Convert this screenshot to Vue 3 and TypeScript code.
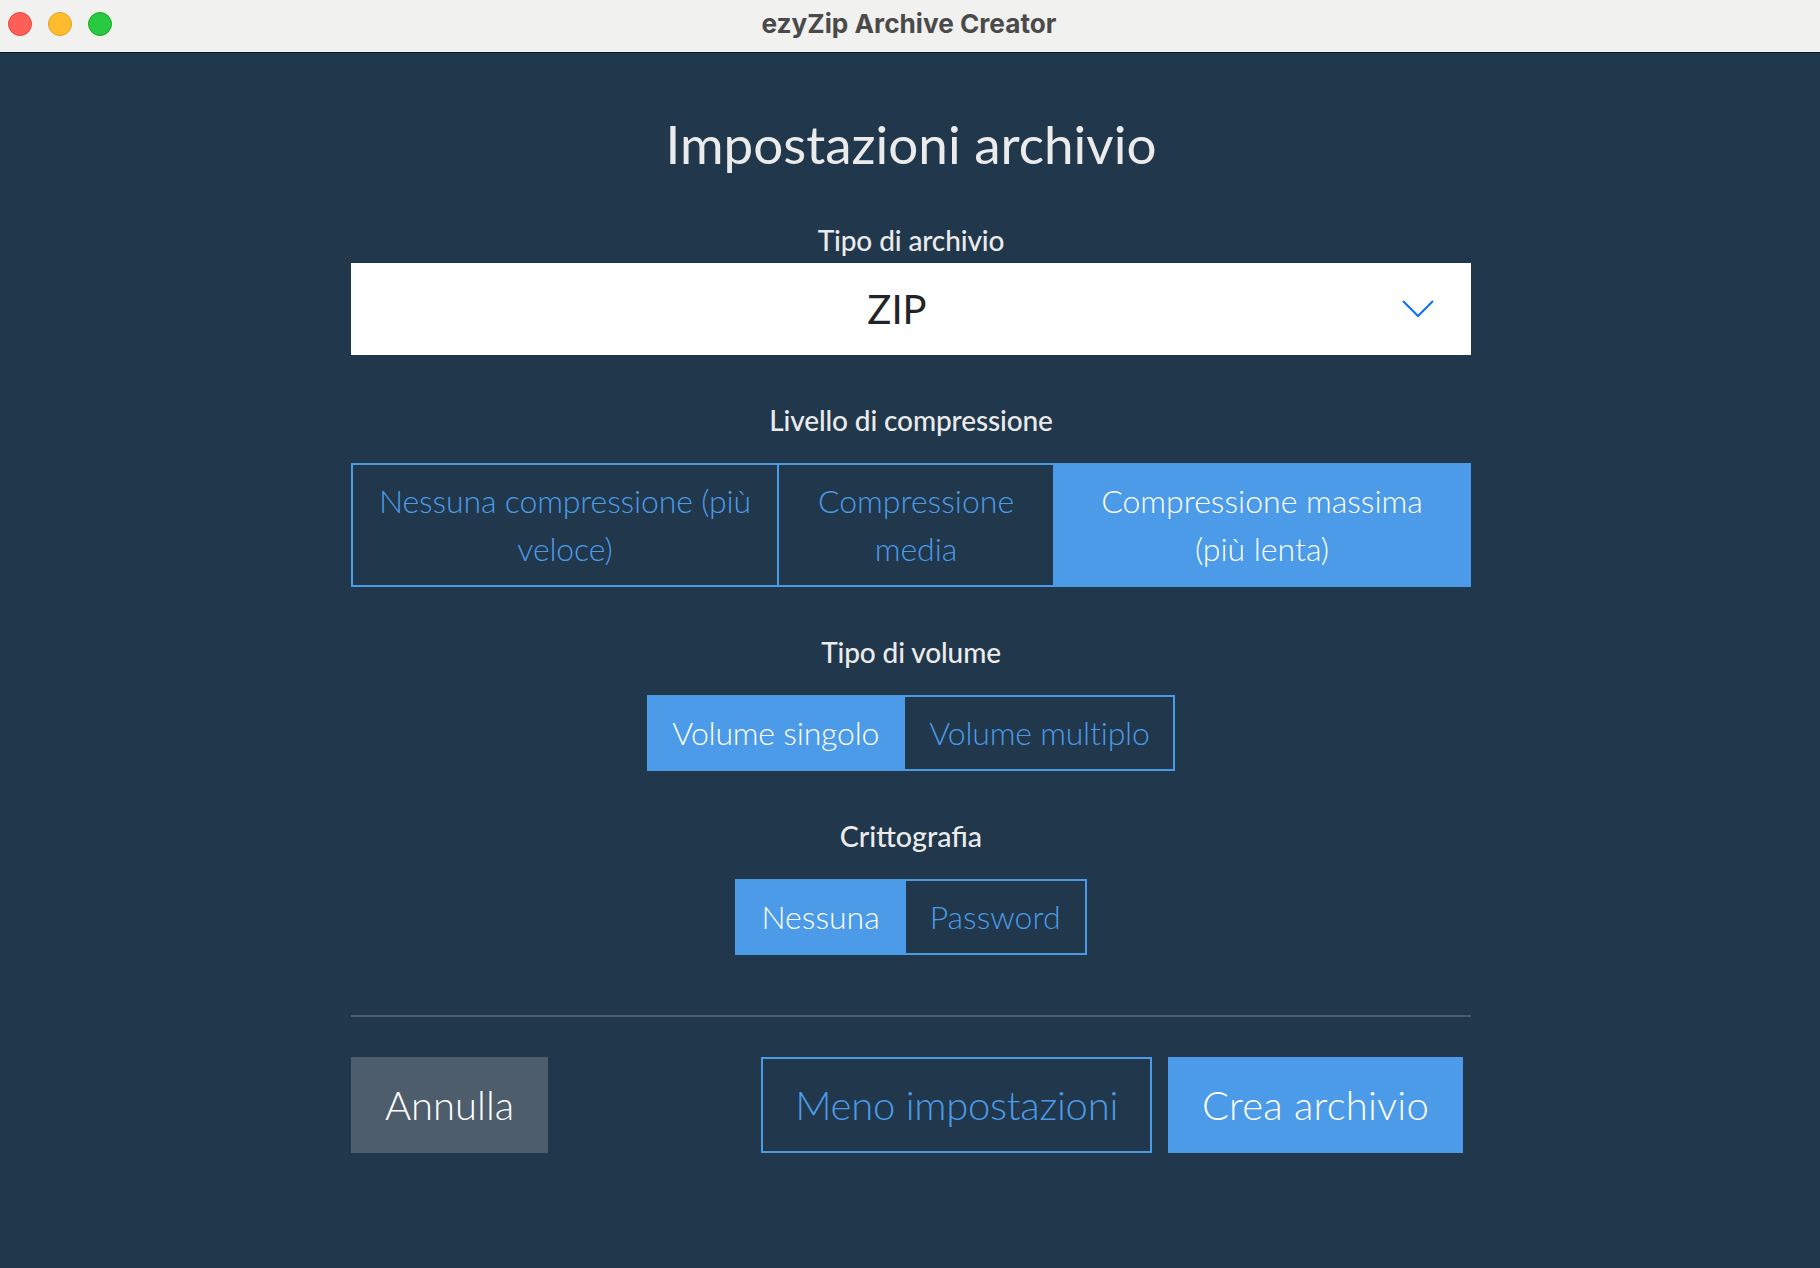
<script setup lang="ts">
interface Option { label: string; active: boolean }
const levels: Option[] = [
  { label: 'Nessuna compressione (più veloce)', active: false },
  { label: 'Compressione media', active: false },
  { label: 'Compressione massima (più lenta)', active: true },
]
const volumes: Option[] = [
  { label: 'Volume singolo', active: true },
  { label: 'Volume multiplo', active: false },
]
const crypto: Option[] = [
  { label: 'Nessuna', active: true },
  { label: 'Password', active: false },
]
</script>

<template>
  <div class="window">
    <header class="titlebar">
      <div class="lights">
        <span class="light red"></span>
        <span class="light yellow"></span>
        <span class="light green"></span>
      </div>
      <span class="wintitle">ezyZip Archive Creator</span>
    </header>
    <main class="content">
      <h1 class="heading">Impostazioni archivio</h1>

      <div class="label first">Tipo di archivio</div>
      <div class="select">
        <span class="select-value">ZIP</span>
        <svg class="chevron" width="32" height="18" viewBox="0 0 32 18" fill="none">
          <path d="M1 1 L16 16 L31 1" stroke="#0d6efd" stroke-width="2" />
        </svg>
      </div>

      <div class="label level-label">Livello di compressione</div>
      <div class="levels">
        <button v-for="o in levels" :key="o.label" class="seg" :class="{ on: o.active }">{{ o.label }}</button>
      </div>

      <div class="label volume-label">Tipo di volume</div>
      <div class="group tight">
        <button v-for="o in volumes" :key="o.label" class="seg" :class="{ on: o.active }">{{ o.label }}</button>
      </div>

      <div class="label crypto-label">Crittografia</div>
      <div class="group">
        <button v-for="o in crypto" :key="o.label" class="seg" :class="{ on: o.active }">{{ o.label }}</button>
      </div>

      <hr class="rule" />

      <div class="actions">
        <button class="big cancel">Annulla</button>
        <div class="actions-right">
          <button class="big outline">Meno impostazioni</button>
          <button class="big primary">Crea archivio</button>
        </div>
      </div>
    </main>
  </div>
</template>

<style scoped>
.window {
  width: 1820px;
  height: 1268px;
  background: #20374c;
  display: flex;
  flex-direction: column;
  font-family: Lato, "Liberation Sans", sans-serif;
  overflow: hidden;
}
.titlebar {
  height: 52px;
  flex: none;
  background: #f1f1ef;
  border-bottom: 1px solid #0c1722;
  display: flex;
  align-items: center;
  justify-content: center;
  position: relative;
}
.lights {
  position: absolute;
  left: 8px;
  top: 12px;
  display: flex;
  gap: 16px;
}
.light {
  width: 24px;
  height: 24px;
  border-radius: 50%;
  box-sizing: border-box;
}
.red { background: #ff5f57; border: 1px solid #e2463f; }
.yellow { background: #febc2e; border: 1px solid #dea123; }
.green { background: #28c840; border: 1px solid #1aab29; }
.wintitle {
  font-family: Inter, "Open Sans", sans-serif;
  font-weight: 700;
  font-size: 26.2px;
  color: #4a4a4a;
  margin: 0 2px 6px 0;
}
.content {
  padding: 0 349px 0 351px;
  display: flex;
  flex-direction: column;
  align-items: center;
}
.heading {
  margin: 60px 0 0;
  font-size: 53px;
  line-height: 62px;
  font-weight: 400;
  color: #ebebeb;
}
.label {
  font-size: 28px;
  line-height: 36px;
  font-weight: 500;
  letter-spacing: -0.12px;
  color: #ebebeb;
}
.first { margin-top: 47px; }
.select {
  margin-top: 5px;
  width: 100%;
  height: 92px;
  background: #fff;
  display: flex;
  align-items: center;
  justify-content: center;
  position: relative;
}
.select-value {
  font-size: 40px;
  color: #212529;
  margin-right: 28px;
}
.chevron {
  position: absolute;
  right: 37px;
  top: 37px;
}
.level-label { margin-top: 47px; }
.levels {
  margin-top: 25px;
  width: 100%;
  display: grid;
  grid-template-columns: 428px 276px 416px;
}
.levels .seg { padding: 12px 20px; }
.levels .seg:first-child { letter-spacing: -0.14px; }
.levels .seg + .seg { margin-left: -2px; }
.group {
  margin-top: 25px;
  display: flex;
}
.group .seg + .seg { margin-left: -2px; }
.tight .seg { letter-spacing: -0.2px; }
.tight .seg:first-child { padding-left: 23px; }
.tight .seg:last-child { padding-right: 23px; }
.seg {
  font-family: inherit;
  font-size: 32px;
  line-height: 48px;
  font-weight: 300;
  padding: 12px 24px;
  border: 2px solid #4c9be8;
  background: transparent;
  color: #4c9be8;
  border-radius: 0;
  text-align: center;
}
.seg.on {
  background: #4c9be8;
  color: #fff;
}
.volume-label { margin-top: 47px; }
.crypto-label {
  margin-top: 47px;
  font-size: 28.6px;
  letter-spacing: normal;
}
.rule {
  width: 100%;
  height: 2px;
  margin: 60px 0 0;
  border: 0;
  background: #4e5d6c;
}
.actions {
  width: 100%;
  margin-top: 40px;
  display: flex;
  justify-content: space-between;
}
.actions-right {
  display: flex;
  gap: 16px;
  margin-right: 8px;
}
.big {
  font-family: inherit;
  font-size: 40px;
  line-height: 60px;
  font-weight: 300;
  padding: 16px 32px;
  border: 2px solid transparent;
  border-radius: 0;
  color: #fff;
}
.cancel { background: #4e5d6c; border-color: #4e5d6c; }
.outline { background: transparent; border-color: #4c9be8; color: #4c9be8; letter-spacing: -0.25px; }
.primary { background: #4c9be8; border-color: #4c9be8; letter-spacing: 0.2px; }
</style>
